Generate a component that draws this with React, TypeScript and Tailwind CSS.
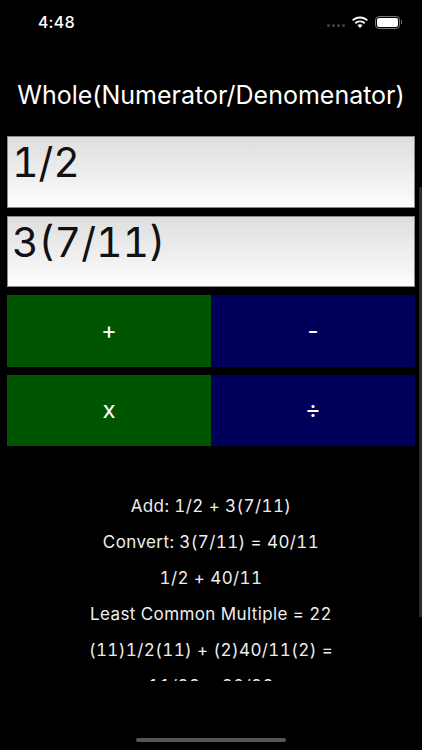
const resultLines = [
    'Add: 1/2 + 3(7/11)',
    'Convert: 3(7/11) = 40/11',
    '1/2 + 40/11',
    'Least Common Multiple = 22',
    '(11)1/2(11) + (2)40/11(2) =',
    '11/22 + 80/22'
];

const FractionInput = ({ value }: { value: string }) => (
    <div className="h-[71.5px] border border-[#8a8a8a] bg-gradient-to-b from-[#dedede] to-[#fdfdfd] pl-1 text-[41px] leading-[50px] tabular-nums text-[#111111]">
        {value}
    </div>
);

const OpButton = ({ label, color }: { label: string; color: string }) => (
    <button className={`flex h-[71.5px] items-center justify-center text-[24px] text-white ${color}`}>
        {label}
    </button>
);

const WifiGlyph = () => (
    <svg width="18" height="13" viewBox="0 0 18 13" fill="white">
        <path d="M9 2.4c2.6 0 5 1 6.8 2.7l1.2-1.3C14.9 1.7 12.1.5 9 .5S3.1 1.7 1 3.8l1.2 1.3C4 3.4 6.4 2.4 9 2.4z" />
        <path d="M9 6.3c1.5 0 2.9.6 4 1.6l1.3-1.3C12.9 5.2 11 4.4 9 4.4s-3.9.8-5.3 2.2L5 7.9c1.1-1 2.5-1.6 4-1.6z" />
        <path d="M9 8.3c-1 0-1.8.4-2.5 1L9 12l2.5-2.7c-.7-.6-1.5-1-2.5-1z" />
    </svg>
);

const App = () => {
    return (
        <div className="relative flex h-[750px] w-[422px] flex-col overflow-hidden bg-black font-['Inter',sans-serif] text-white">
            {/* status bar */}
            <div className="flex h-[44px] items-center justify-between pl-[38px] pr-[20px]">
                <span className="text-[16px] font-medium tracking-[0.5px] tabular-nums">4:48</span>
                <div className="flex items-center gap-[6px]">
                    <div className="mt-[7px] flex gap-[2px]">
                        <span className="h-[3px] w-[3px] rounded-full bg-[#444444]" />
                        <span className="h-[3px] w-[3px] rounded-full bg-[#444444]" />
                        <span className="h-[3px] w-[3px] rounded-full bg-[#444444]" />
                        <span className="h-[3px] w-[3px] rounded-full bg-[#444444]" />
                    </div>
                    <WifiGlyph />
                    <div className="flex items-center">
                        <div className="h-[13px] w-[25px] rounded-[4px] border border-[#777777] p-px">
                            <div className="h-full w-full rounded-[2px] bg-white" />
                        </div>
                        <div className="ml-px h-[4px] w-px bg-[#777777]" />
                    </div>
                </div>
            </div>

            <div className="mt-[33px] text-center text-[25px] leading-[36px]">
                Whole(Numerator/Denomenator)
            </div>

            <div className="mt-[23px] flex flex-col gap-2 px-[7px]">
                <FractionInput value="1/2" />
                <FractionInput value="3(7/11)" />
                <div className="grid grid-cols-2">
                    <OpButton label="+" color="bg-[#005500]" />
                    <OpButton label="-" color="bg-[#00005a]" />
                </div>
                <div className="grid grid-cols-2">
                    <OpButton label="x" color="bg-[#005500]" />
                    <OpButton label="÷" color="bg-[#00005a]" />
                </div>
            </div>

            {/* results, clipped by the scroll view */}
            <div className="mt-[42px] h-[193px] overflow-hidden text-center text-[17px] leading-[36px] tabular-nums tracking-[0.4px] text-[#eeeeee]">
                {resultLines.map((line) => (
                    <div key={line}>{line}</div>
                ))}
            </div>

            {/* scroll indicator */}
            <div className="absolute right-0 top-[187px] h-[430px] w-[3px] bg-[#2a2a2a]" />
            {/* home indicator */}
            <div className="absolute bottom-[8px] left-[136px] h-[4px] w-[150px] rounded-full bg-[#555555]" />
        </div>
    );
};

export default App;
